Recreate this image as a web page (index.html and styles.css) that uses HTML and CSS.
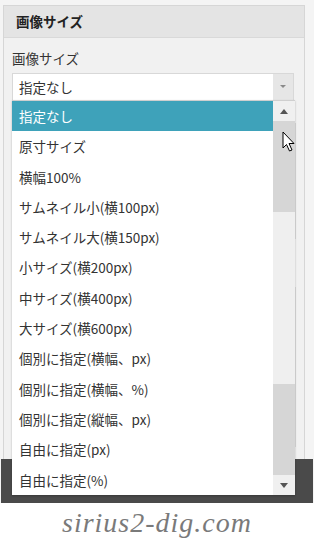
FILE: index.html
```
<!DOCTYPE html>
<html lang="ja">
<head>
<meta charset="UTF-8" />
<title>画像サイズ</title>
<link rel="stylesheet" href="styles.css">
</head>
<body>
  <div class="stage">
    <div class="panel">
      <div class="panel-head">画像サイズ</div>
      <div class="panel-body">
        <div class="field-label">画像サイズ</div>
        <div class="select">
          <span class="select-value">指定なし</span>
          <span class="select-arrow"></span>
        </div>
        <!-- boxes behind the open list -->
        <div class="under-box box-a"></div>
        <div class="under-box box-b"></div>
      </div>
    </div>
    <div class="dark-band"></div>

    <!-- open dropdown -->
    <div class="dropdown">
      <ul class="options">
        <li class="selected">指定なし</li>
        <li>原寸サイズ</li>
        <li>横幅100%</li>
        <li>サムネイル小(横100px)</li>
        <li>サムネイル大(横150px)</li>
        <li>小サイズ(横200px)</li>
        <li>中サイズ(横400px)</li>
        <li>大サイズ(横600px)</li>
        <li>個別に指定(横幅、px)</li>
        <li>個別に指定(横幅、%)</li>
        <li>個別に指定(縦幅、px)</li>
        <li>自由に指定(px)</li>
        <li>自由に指定(%)</li>
      </ul>
      <div class="scrollbar">
        <div class="sb-btn"><span class="tri-up"></span></div>
        <div class="sb-track">
          <div class="sb-block top"></div>
          <div class="sb-gap"></div>
          <div class="sb-block bottom"></div>
        </div>
        <div class="sb-btn"><span class="tri-down"></span></div>
      </div>
    </div>

    <svg class="cursor" width="14" height="22" viewBox="0 0 14 22">
      <path d="M1 1 L1 17 L4.5 13.5 L7.5 20 L10 19 L7 12.5 L12 12.5 Z" fill="#fff" stroke="#000" stroke-width="1" stroke-linejoin="round"/>
    </svg>
  </div>
  <div class="watermark">sirius2-dig.com</div>
</body>
</html>
```

FILE: styles.css
```
html, body {
  margin: 0;
  padding: 0;
  background: #fff;
  font-family: "Noto Sans CJK JP", "Noto Sans", sans-serif;
  color: #333;
  overflow: hidden;
}
.stage {
  position: relative;
  height: 503px;
  background: #f4f4f4;
  padding-top: 5px;
  box-sizing: border-box;
}
.panel {
  margin-left: 3px;
  width: 302px;
  height: 454px;
  box-sizing: border-box;
  border: 1px solid #d6d6d6;
  border-bottom: none;
  background: #f1f1f1;
}
.panel-head {
  height: 31px;
  line-height: 30px;
  padding-left: 12px;
  background: #e4e4e4;
  border-bottom: 1px solid #d9d9d9;
  font-size: 13.5px;
  font-weight: bold;
  color: #222;
}
.panel-body {
  padding: 10px 8px 0 8px;
}
.field-label {
  font-size: 13.5px;
  line-height: 20px;
  margin-bottom: 5px;
}
.select {
  display: flex;
  height: 28px;
  width: 282px;
  box-sizing: border-box;
  border: 1px solid #d8d8d8;
  background: #fff;
}
.select-value {
  flex-grow: 1;
  padding-left: 6px;
  font-size: 13.5px;
  line-height: 26px;
}
.select-arrow {
  width: 20px;
  background: #e6e6e6;
  position: relative;
}
.select-arrow::after {
  content: "";
  position: absolute;
  left: 7px;
  top: 11px;
  border-left: 3px solid transparent;
  border-right: 3px solid transparent;
  border-top: 3px solid #8a8a8a;
}
.under-box {
  border: 1px solid #dcdcdc;
  background: #f3f3f3;
  width: 284px;
  box-sizing: border-box;
}
.box-a {
  margin-top: 22px;
  height: 116px;
}
.box-b {
  margin-top: 48px;
  height: 160px;
}
.dark-band {
  margin-left: 1px;
  width: 312px;
  height: 44px;
  background: #4a4a4a;
}
.dropdown {
  position: absolute;
  left: 12px;
  top: 100px;
  width: 283px;
  height: 395px;
  display: flex;
  background: #fff;
  border-top: 1px solid #cfcfcf;
  box-sizing: border-box;
  box-shadow: 0 1px 2px rgba(0,0,0,0.25);
}
.options {
  list-style: none;
  margin: 0;
  padding: 0;
  flex-grow: 1;
}
.options li {
  height: 30.3px;
  line-height: 30px;
  padding-left: 7px;
  font-size: 13.5px;
  color: #333;
  white-space: nowrap;
}
.options li.selected {
  background: #3ea2ba;
  color: #fff;
}
.scrollbar {
  width: 22px;
  display: flex;
  flex-direction: column;
  background: #efefef;
}
.sb-btn {
  height: 20px;
  background: #f0f0f0;
  display: flex;
  align-items: center;
  justify-content: center;
}
.tri-up {
  border-left: 4px solid transparent;
  border-right: 4px solid transparent;
  border-bottom: 5px solid #555;
}
.tri-down {
  border-left: 4px solid transparent;
  border-right: 4px solid transparent;
  border-top: 5px solid #555;
}
.sb-track {
  flex-grow: 1;
  display: flex;
  flex-direction: column;
}
.sb-block {
  background: #d6d6d6;
  height: 91px;
}
.sb-gap {
  flex-grow: 1;
}
.cursor {
  position: absolute;
  left: 282px;
  top: 131px;
}
.watermark {
  text-align: center;
  font-family: "Liberation Serif", serif;
  font-style: italic;
  font-size: 28px;
  color: #7a7a7a;
  letter-spacing: 1px;
  line-height: 40px;
}
```
